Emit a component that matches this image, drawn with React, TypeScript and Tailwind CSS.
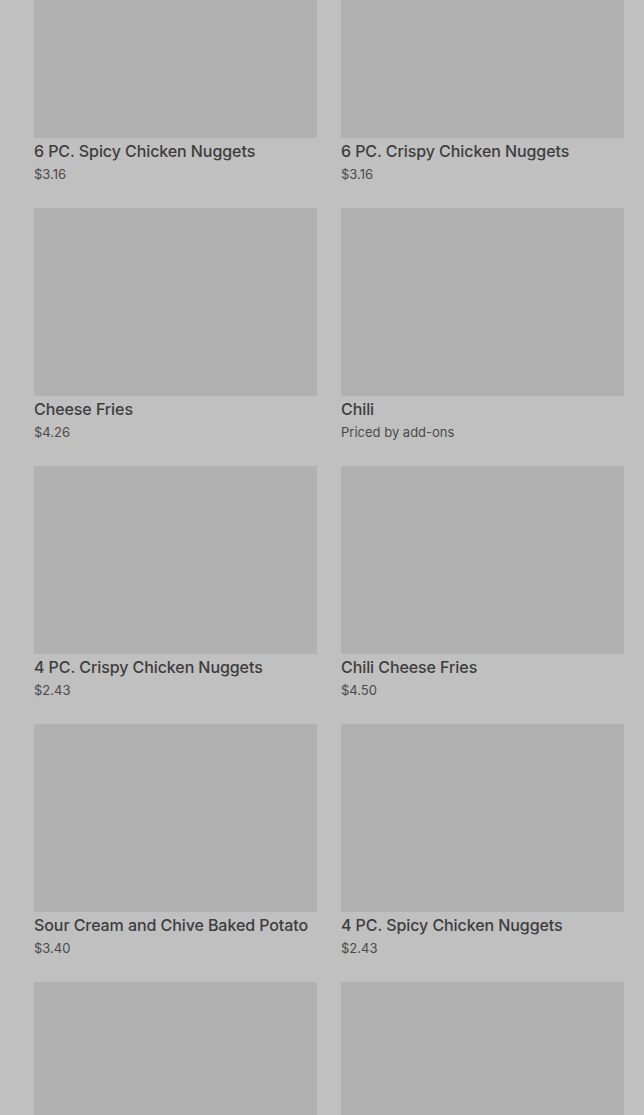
const items = [
  { name: '6 PC. Spicy Chicken Nuggets', price: '$3.16' },
  { name: '6 PC. Crispy Chicken Nuggets', price: '$3.16' },
  { name: 'Cheese Fries', price: '$4.26' },
  { name: 'Chili', price: 'Priced by add-ons' },
  { name: '4 PC. Crispy Chicken Nuggets', price: '$2.43' },
  { name: 'Chili Cheese Fries', price: '$4.50' },
  { name: 'Sour Cream and Chive Baked Potato', price: '$3.40' },
  { name: '4 PC. Spicy Chicken Nuggets', price: '$2.43' },
]

export default function App() {
  return (
    <div className="h-[1115px] overflow-hidden bg-[#c0c0c0] font-['Inter',sans-serif]">
      <div className="mt-[-50px] grid grid-cols-2 gap-x-6 gap-y-6 pl-[34px] pr-5">
        {items.map((item) => (
          <div key={item.name} className="flex flex-col">
            <div className="h-[188px] bg-[#b1b1b1]" />
            <div className="pt-px text-base leading-6 font-medium tracking-[-0.08px] text-[#3d3d3d]">
              {item.name}
            </div>
            <div className="mt-px text-[13px] leading-5 text-[#4a4a4a]">{item.price}</div>
          </div>
        ))}
        {/* next row, only the images are in view */}
        <div className="h-[188px] bg-[#b1b1b1]" />
        <div className="h-[188px] bg-[#b1b1b1]" />
      </div>
    </div>
  )
}
